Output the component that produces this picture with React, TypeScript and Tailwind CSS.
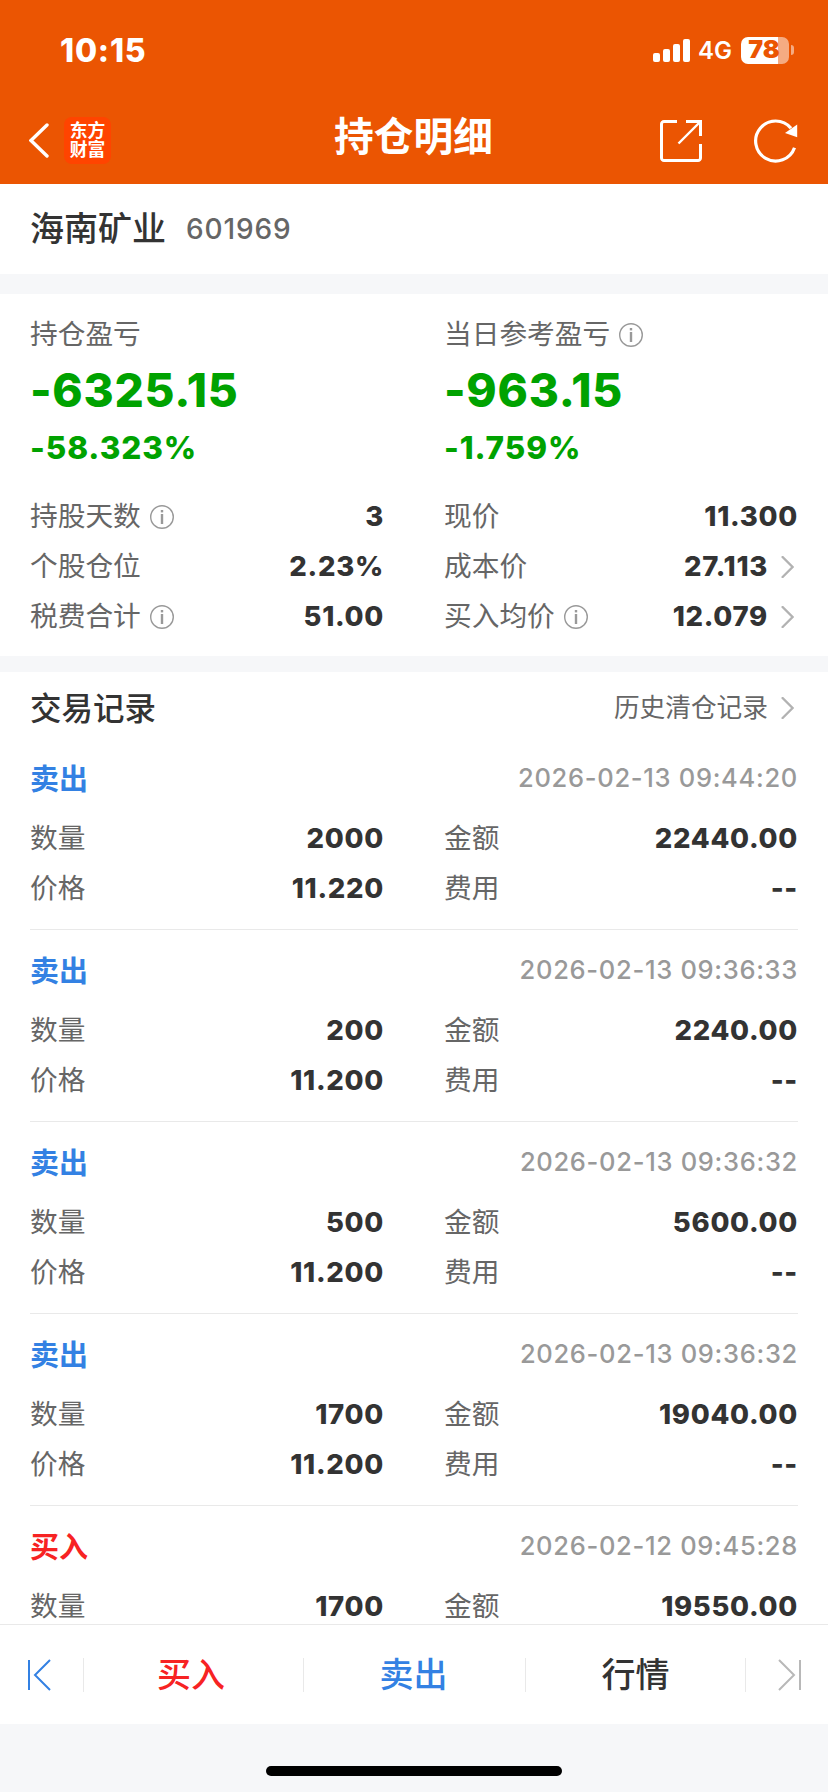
type Field = {
  label: string;
  value: string;
  info?: boolean;
  link?: boolean;
};

type Trade = {
  side: "buy" | "sell";
  time: string;
  fields: Field[];
};

const leftFields: Field[] = [
  { label: "持股天数", value: "3", info: true },
  { label: "个股仓位", value: "2.23%" },
  { label: "税费合计", value: "51.00", info: true },
];

const rightFields: Field[] = [
  { label: "现价", value: "11.300" },
  { label: "成本价", value: "27.113", link: true },
  { label: "买入均价", value: "12.079", info: true, link: true },
];

const trades: Trade[] = [
  {
    side: "sell",
    time: "2026-02-13 09:44:20",
    fields: [
      { label: "数量", value: "2000" },
      { label: "金额", value: "22440.00" },
      { label: "价格", value: "11.220" },
      { label: "费用", value: "--" },
    ],
  },
  {
    side: "sell",
    time: "2026-02-13 09:36:33",
    fields: [
      { label: "数量", value: "200" },
      { label: "金额", value: "2240.00" },
      { label: "价格", value: "11.200" },
      { label: "费用", value: "--" },
    ],
  },
  {
    side: "sell",
    time: "2026-02-13 09:36:32",
    fields: [
      { label: "数量", value: "500" },
      { label: "金额", value: "5600.00" },
      { label: "价格", value: "11.200" },
      { label: "费用", value: "--" },
    ],
  },
  {
    side: "sell",
    time: "2026-02-13 09:36:32",
    fields: [
      { label: "数量", value: "1700" },
      { label: "金额", value: "19040.00" },
      { label: "价格", value: "11.200" },
      { label: "费用", value: "--" },
    ],
  },
  {
    side: "buy",
    time: "2026-02-12 09:45:28",
    fields: [
      { label: "数量", value: "1700" },
      { label: "金额", value: "19550.00" },
    ],
  },
];

function InfoIcon() {
  return (
    <svg className="ml-[9px] shrink-0" width="24" height="24" viewBox="0 0 24 24" fill="none">
      <circle cx="12" cy="12" r="11.3" stroke="#999" strokeWidth="1.4" />
      <rect x="10.8" y="5" width="2.4" height="2.4" fill="#999" />
      <rect x="10.8" y="9" width="2.4" height="10" fill="#999" />
    </svg>
  );
}

function Chevron() {
  return (
    <svg className="ml-[13px] mr-1 shrink-0" width="13" height="22" viewBox="0 0 13 22" fill="none" stroke="#b2b2b2" strokeWidth="2.4">
      <path d="M1.6 1L11.6 11L1.6 21" strokeLinecap="round" />
    </svg>
  );
}

function FieldRow({ label, value, info, link }: Field) {
  return (
    <div className="flex h-[50px] items-center">
      <span className="text-[27.7px] text-[#666]">{label}</span>
      {info && <InfoIcon />}
      <span className="ml-auto text-[27.5px] font-extrabold tracking-[0.7px] text-[#333]">{value}</span>
      {link && <Chevron />}
    </div>
  );
}

function Profit({ label, amount, percent, info }: { label: string; amount: string; percent: string; info?: boolean }) {
  return (
    <div className="mb-[18px]">
      <div className="flex h-11 items-center pt-0.5 text-[27.7px] text-[#666]">
        {label}
        {info && <InfoIcon />}
      </div>
      <div className="flex h-[66px] items-center pt-0.5 text-[46px] font-extrabold tracking-[0.7px] text-[#00a200]">{amount}</div>
      <div className="flex h-[52px] items-center text-[31.5px] font-extrabold tracking-[0.9px] text-[#00a200]">{percent}</div>
    </div>
  );
}

function TradeItem({ trade }: { trade: Trade }) {
  return (
    <div className="h-48 shrink-0 border-b border-[#e9e9e9] pt-4">
      <div className="mb-2 flex h-[52px] items-center justify-between">
        <span className={`text-[29px] font-bold ${trade.side === "sell" ? "text-[#3381e3]" : "text-[#f72323]"}`}>
          {trade.side === "sell" ? "卖出" : "买入"}
        </span>
        <span className="pb-[3px] text-[25.5px] font-medium tracking-[0.7px] text-[#999]">{trade.time}</span>
      </div>
      <div className="grid grid-cols-2 gap-x-[60px]">
        {trade.fields.map((f) => (
          <FieldRow key={f.label} {...f} />
        ))}
      </div>
    </div>
  );
}

function StatusBar() {
  return (
    <div className="flex h-[100px] items-center justify-between pl-[60px] pr-[34px] text-white">
      <span className="pt-px text-[32px] font-extrabold tracking-[0.8px]">10:15</span>
      <div className="flex items-center">
        <svg width="37" height="23" viewBox="0 0 37 23" fill="#fff">
          <rect x="0" y="14" width="7" height="9" rx="2" />
          <rect x="10" y="10" width="7" height="13" rx="2" />
          <rect x="20" y="5" width="7" height="18" rx="2" />
          <rect x="30" y="0" width="7" height="23" rx="2" />
        </svg>
        <span className="ml-2 pt-0.5 text-[24px] font-semibold">4G</span>
        <div className="ml-[9px] flex h-[27px] w-12 items-center justify-center rounded-[7px] bg-[linear-gradient(90deg,#fff_77%,#f5ab82_77%)]">
          <span className="pr-0.5 text-[25px] font-black text-[#eb5502]">78</span>
        </div>
        <div className="ml-0.5 h-2.5 w-[3px] rounded-r-full bg-[#f5ab82]" />
      </div>
    </div>
  );
}

function NavBar() {
  return (
    <div className="grid h-[84px] grid-cols-3 items-center pb-1 pl-[29px] pr-[30px] text-white">
      <div className="flex items-center">
        <svg width="21" height="36" viewBox="0 0 21 36" fill="none" stroke="#fff" strokeWidth="3.4" strokeLinecap="round">
          <path d="M18 3L2 18.5L18 34" />
        </svg>
        <div className="ml-3.5 flex h-[47px] w-[47px] flex-col items-center justify-center rounded-lg bg-[#ff4400] text-[17.8px] font-bold leading-[19.5px]">
          <span>东方</span>
          <span>财富</span>
        </div>
      </div>
      <h1 className="pb-1 text-center text-[39.7px] font-bold leading-none">持仓明细</h1>
      <div className="flex items-center justify-end gap-[52px] pt-0.5">
        <svg width="42" height="42" viewBox="0 0 42 42" fill="none" stroke="#fff" strokeWidth="3">
          <path d="M17 1.5H4A2.5 2.5 0 0 0 1.5 4V38A2.5 2.5 0 0 0 4 40.5H38A2.5 2.5 0 0 0 40.5 38V24" />
          <path d="M26 1.5H40.5V16" />
          <path d="M40 2L18.5 23.5" strokeWidth="2.4" />
        </svg>
        <svg width="44" height="44" viewBox="0 1.3 44 44" fill="none">
          <path d="M40.5 30A20 20 0 1 1 37 10.5" stroke="#fff" strokeWidth="3.2" />
          <path d="M43.2 6.8V19.5L31 15.2Z" fill="#fff" />
        </svg>
      </div>
    </div>
  );
}

export default function App() {
  return (
    <div className="flex h-[1792px] w-[828px] flex-col overflow-hidden bg-[#f6f7f9] font-['Inter','Noto_Sans_CJK_SC',sans-serif]">
      <header className="h-[184px] shrink-0 bg-[#eb5502]">
        <StatusBar />
        <NavBar />
      </header>

      <div className="flex h-[90px] shrink-0 items-center bg-white px-[30px] pb-0.5">
        <span className="text-[34px] font-medium text-[#333]">海南矿业</span>
        <span className="ml-5 pt-px text-[28px] font-medium tracking-[0.9px] text-[#666]">601969</span>
      </div>

      <section className="mt-5 grid h-[362px] shrink-0 grid-cols-2 gap-x-[60px] bg-white px-[30px] pt-[18px]">
        <div>
          <Profit label="持仓盈亏" amount="-6325.15" percent="-58.323%" />
          {leftFields.map((f) => (
            <FieldRow key={f.label} {...f} />
          ))}
        </div>
        <div>
          <Profit label="当日参考盈亏" amount="-963.15" percent="-1.759%" info />
          {rightFields.map((f) => (
            <FieldRow key={f.label} {...f} />
          ))}
        </div>
      </section>

      <section className="mt-4 flex min-h-0 flex-1 flex-col overflow-hidden bg-white px-[30px]">
        <div className="flex h-[66px] shrink-0 items-center justify-between pt-[7px]">
          <h2 className="text-[31.5px] font-medium text-[#333]">交易记录</h2>
          <div className="flex items-center text-[25.7px] text-[#666]">
            历史清仓记录
            <Chevron />
          </div>
        </div>
        {trades.map((t, i) => (
          <TradeItem key={i} trade={t} />
        ))}
      </section>

      <nav className="flex h-[100px] shrink-0 items-center border-t border-[#e9e9e9] bg-white text-[34px] font-medium">
        <div className="flex w-[83px] justify-center">
          <svg className="mr-1" width="23" height="32" viewBox="0 0 23 32" fill="none" stroke="#3381e3" strokeWidth="2">
            <path d="M1 1V31M22 1L7 16L22 31" />
          </svg>
        </div>
        <div className="flex h-[34px] w-[220px] items-center justify-center border-l border-[#e9e9e9] pr-[5px] text-[#f72323]">买入</div>
        <div className="flex h-[34px] w-[222px] items-center justify-center border-l border-[#e9e9e9] pr-0.5 text-[#3381e3]">卖出</div>
        <div className="flex h-[34px] w-[221px] items-center justify-center border-x border-[#e9e9e9] text-[#333]">行情</div>
        <div className="flex w-[82px] justify-center">
          <svg className="ml-1" width="23" height="32" viewBox="0 0 23 32" fill="none" stroke="#b8b8b8" strokeWidth="2">
            <path d="M22 1V31M1 1L16 16L1 31" />
          </svg>
        </div>
      </nav>
      <div className="flex h-[68px] shrink-0 justify-center pt-[42px]">
        <div className="h-2.5 w-[296px] rounded-full bg-black" />
      </div>
    </div>
  );
}
